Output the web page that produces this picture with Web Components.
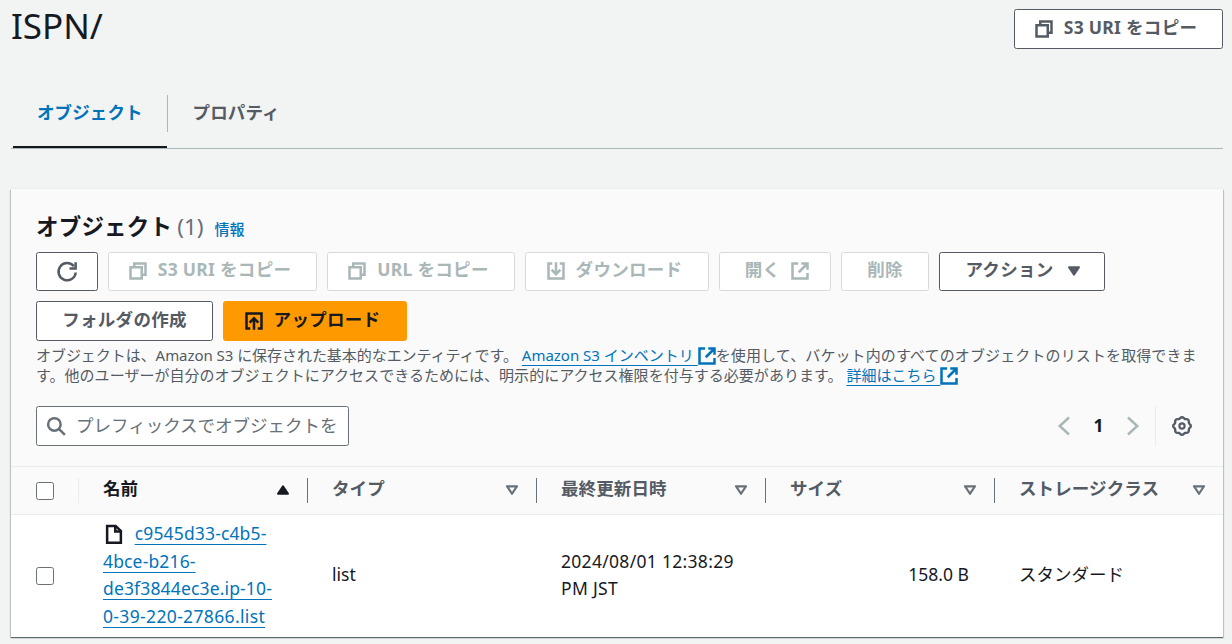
<!DOCTYPE html>
<html lang="ja">
<head>
<meta charset="utf-8">
<title>ISPN/</title>
<style>
    body {
        margin: 0;
        height: 644px;
        overflow: hidden;
        background: #f2f3f3;
        color: #16191f;
        font: 17.5px/27.5px "Noto Sans", "Noto Sans CJK JP", sans-serif;
    }
</style>
</head>
<body>
<s3-page></s3-page>
<script>
// rounded cog outline with eight teeth
function gearPath() {
    const points = [];
    for (let i = 0; i < 64; i++) {
        const a = (i / 64) * Math.PI * 2;
        const r = 6.55 + 0.5 * Math.cos(8 * a);
        points.push(`${(8 + r * Math.cos(a)).toFixed(2)} ${(8 + r * Math.sin(a)).toFixed(2)}`);
    }
    return `M${points.join('L')}z`;
}

const icons = {
    copy: '<path d="M2 5h9v9H2z"/><path d="M5 5V2h9v9h-3"/>',
    download: '<path d="M5 2H2v12h12V2h-3"/><path d="M8 1v9M4.5 7L8 10.5 11.5 7"/>',
    upload: '<path d="M5 14H2V2h12v12h-3"/><path d="M8 15V6M4.5 9.3L8 5.8l3.5 3.5"/>',
    external: '<path d="M14 9.5V14H2V2h4.5"/><path d="M9 2h5v5M14 2L7 9"/>',
    refresh: '<path d="M15 9.2A6.9 6.9 0 1 1 13.5 4.2"/><path d="M14.9 1v5H10"/>',
    caret: '<path d="M4 5h8l-4 6z" fill="currentColor" stroke-width="1.6" stroke-linejoin="round"/>',
    sortup: '<path d="M4 11h8L8 5z" fill="currentColor" stroke-width="1.6" stroke-linejoin="round"/>',
    sort: '<path d="M4 5h8l-4 6z" stroke-width="1.8" stroke-linejoin="round"/>',
    search: '<circle cx="6.7" cy="6.7" r="5"/><path d="M10.3 10.3l4.8 4.8"/>',
    prev: '<path d="M12 1.2L4.6 8l7.4 6.8"/>',
    next: '<path d="M4 1.2L11.4 8 4 14.8"/>',
    file: '<path d="M2.5 1.5h6.8l4.2 4.2v9.3h-11z"/><path d="M9 1.5V6h4.5"/>',
    gear: `<path d="${gearPath()}" stroke-width="1.9"/><circle cx="8" cy="8" r="2.1" stroke-width="1.7"/>`
};

class S3Icon extends HTMLElement {
    constructor() {
        super();
        this.attachShadow({ mode: 'open' });
    }

    connectedCallback() {
        const name = this.getAttribute('name');
        this.shadowRoot.innerHTML = `
            <style>
                :host { display: inline-block; width: 20px; height: 20px; flex: none; }
                svg {
                    display: block;
                    width: 20px;
                    height: 20px;
                    overflow: visible;
                    fill: none;
                    stroke: currentColor;
                    stroke-width: 2;
                }
            </style>
            <svg viewBox="0 0 16 16">${icons[name]}</svg>
        `;
    }
}

class S3Button extends HTMLElement {
    constructor() {
        super();
        this.attachShadow({ mode: 'open' });
        this.shadowRoot.innerHTML = `
            <style>
                :host { display: block; flex: none; color: #545b64; }
                :host([disabled]) { color: #aab7b8; }
                :host([primary]) { color: #16191f; }
                button {
                    box-sizing: border-box;
                    width: 100%;
                    height: var(--height, 39px);
                    display: flex;
                    align-items: center;
                    justify-content: center;
                    gap: 10px;
                    padding: 0 0 1px;
                    border: 1px solid currentColor;
                    border-radius: 2.5px;
                    background: #fff;
                    color: inherit;
                    font: inherit;
                    font-weight: 700;
                    letter-spacing: 0.3px;
                    white-space: nowrap;
                }
                :host([disabled]) button { border-color: #d5dbdb; }
                :host([primary]) button { background: #ff9900; border-color: #ff9900; }
                :host([icon="start"]) button { padding-right: 6px; }
                :host([icon="end"]) button { padding-left: 5px; }
                .label { margin-bottom: 2px; }
            </style>
            <button><slot name="before"></slot><span class="label"><slot></slot></span><slot name="after"></slot></button>
        `;
    }
}

class S3Tab extends HTMLElement {
    constructor() {
        super();
        this.attachShadow({ mode: 'open' });
        this.shadowRoot.innerHTML = `
            <style>
                :host {
                    display: flex;
                    align-items: flex-start;
                    height: 53px;
                    font-weight: 700;
                    color: #545b64;
                }
                :host([active]) { color: #0073bb; border-bottom: 2px solid #16191f; height: 51px; }
                .label {
                    height: 37px;
                    line-height: 34px;
                    padding: 0 24px 0 25px;
                    letter-spacing: 0.1px;
                }
                :host([active]) .label { padding-left: 24px; }
            </style>
            <span class="label"><slot></slot></span>
        `;
    }
}

class S3Link extends HTMLElement {
    constructor() {
        super();
        this.attachShadow({ mode: 'open' });
        this.shadowRoot.innerHTML = `
            <style>
                :host { display: inline; color: #0073bb; }
                a {
                    color: inherit;
                    text-decoration: underline;
                    text-decoration-thickness: 1px;
                    text-underline-offset: 4px;
                    text-decoration-skip-ink: none;
                }
            </style>
            <a><slot></slot></a>
        `;
    }
}

class S3Checkbox extends HTMLElement {
    constructor() {
        super();
        this.attachShadow({ mode: 'open' });
        this.shadowRoot.innerHTML = `
            <style>
                :host {
                    display: block;
                    box-sizing: border-box;
                    width: 18px;
                    height: 18px;
                    border: 1px solid #687078;
                    border-radius: 2.5px;
                    background: #fff;
                }
            </style>
        `;
    }
}

class S3Column extends HTMLElement {
    constructor() {
        super();
        this.attachShadow({ mode: 'open' });
    }

    connectedCallback() {
        const icon = this.hasAttribute('sorted') ? 'sortup' : 'sort';
        this.shadowRoot.innerHTML = `
            <style>
                :host {
                    display: flex;
                    align-items: center;
                    justify-content: space-between;
                    box-sizing: border-box;
                    height: 25px;
                    padding: 0 14px 0 24px;
                    border-right: 1px solid #687078;
                    font-weight: 700;
                    color: #545b64;
                }
                :host([sorted]) { color: #16191f; }
                :host([last]) { border-right-color: transparent; }
                s3-icon { color: #687078; margin-bottom: 2px; }
                :host([sorted]) s3-icon { color: #16191f; }
                span { margin-bottom: 3px; white-space: nowrap; letter-spacing: 0.1px; }
            </style>
            <span><slot></slot></span><s3-icon name="${icon}"></s3-icon>
        `;
    }
}

class S3Table extends HTMLElement {
    constructor() {
        super();
        this.attachShadow({ mode: 'open' });
        this.shadowRoot.innerHTML = `
            <style>
                :host { display: block; }
                .head, .row {
                    display: grid;
                    grid-template-columns: 68px repeat(5, 229px);
                    align-items: center;
                }
                .head {
                    box-sizing: border-box;
                    height: 49px;
                    border-top: 1px solid #eaeded;
                    border-bottom: 1px solid #eaeded;
                    background: #fafafa;
                }
                .row { height: 122px; background: #fff; }
                .check {
                    display: flex;
                    align-items: center;
                    box-sizing: border-box;
                    height: 25px;
                    padding-left: 25px;
                }
                .head .check { border-right: 1px solid #eaeded; }
                .cell { padding: 0 26px 2px 24px; white-space: nowrap; }
                .name { letter-spacing: 0.15px; }
                .name s3-icon { vertical-align: -4px; margin: 0 6px 0 1px; }
                .wide { letter-spacing: 0.35px; }
                .date { letter-spacing: 0.3px; }
                .size { text-align: right; }
            </style>
            <div class="head">
                <div class="check"><s3-checkbox></s3-checkbox></div>
                <s3-column sorted>名前</s3-column>
                <s3-column>タイプ</s3-column>
                <s3-column>最終更新日時</s3-column>
                <s3-column>サイズ</s3-column>
                <s3-column last>ストレージクラス</s3-column>
            </div>
            <div class="row">
                <div class="check"><s3-checkbox></s3-checkbox></div>
                <div class="cell name"><s3-icon name="file"></s3-icon> <s3-link>c9545d33-c4b5-<br>4bce-b216-<br>de3f3844ec3e.ip-10-<br><span class="wide">0-39-220-27866.list</span></s3-link></div>
                <div class="cell">list</div>
                <div class="cell date">2024/08/01 12:38:29<br>PM JST</div>
                <div class="cell size">158.0 B</div>
                <div class="cell">スタンダード</div>
            </div>
        `;
    }
}

class S3Panel extends HTMLElement {
    constructor() {
        super();
        this.attachShadow({ mode: 'open' });
        this.shadowRoot.innerHTML = `
            <style>
                :host {
                    display: block;
                    width: 1212px;
                    height: 448px;
                    overflow: hidden;
                    background: #fafafa;
                }
                .top { padding: 23px 25px 0; }
                h2 {
                    margin: 0;
                    height: 40px;
                    font-size: 22.5px;
                    line-height: 30px;
                    display: flex;
                    align-items: baseline;
                }
                h2 .title { letter-spacing: 0.2px; }
                h2 .count { margin-left: 5px; font-weight: 400; color: #687078; }
                h2 .info { margin-left: 11px; font-size: 15px; font-weight: 500; color: #0073bb; }
                .actions { display: flex; flex-wrap: wrap; gap: 10px; }
                p {
                    margin: 4px 0 0;
                    font-size: 15px;
                    line-height: 20px;
                    color: #545b64;
                    white-space: nowrap;
                }
                p s3-icon { position: relative; top: 1px; color: #0073bb; margin: 0 -1px 0 -1px; vertical-align: top; }
                .lead { letter-spacing: -0.05px; }
                .rest { letter-spacing: 0.12px; }
                .access { letter-spacing: 0.03px; }
                .tools { display: flex; align-items: center; height: 40px; margin-top: 21px; }
                .search {
                    display: flex;
                    align-items: center;
                    gap: 10px;
                    box-sizing: border-box;
                    width: 313px;
                    height: 40px;
                    padding: 0 9px;
                    border: 1px solid #687078;
                    border-radius: 2.5px;
                    background: #fff;
                    color: #687078;
                }
                .search span { white-space: nowrap; }
                .pages {
                    display: flex;
                    align-items: center;
                    margin-left: auto;
                    height: 40px;
                    color: #aab7b8;
                }
                .pages b { width: 49px; text-align: center; color: #16191f; }
                .settings {
                    display: flex;
                    align-items: center;
                    height: 40px;
                    margin-left: 12px;
                    padding: 0 6px 0 16px;
                    border-left: 1px solid #eaeded;
                    color: #545b64;
                }
                s3-table { margin-top: 20px; }
            </style>
            <div class="top">
                <h2><span class="title">オブジェクト</span><span class="count">(1)</span><span class="info">情報</span></h2>
                <div class="actions">
                    <s3-button style="width: 62px"><s3-icon slot="before" name="refresh" style="margin-right: -10px"></s3-icon></s3-button>
                    <s3-button disabled icon="start" style="width: 209px"><s3-icon slot="before" name="copy"></s3-icon>S3 URI をコピー</s3-button>
                    <s3-button disabled icon="start" style="width: 188px"><s3-icon slot="before" name="copy"></s3-icon>URL をコピー</s3-button>
                    <s3-button disabled icon="start" style="width: 184px"><s3-icon slot="before" name="download"></s3-icon>ダウンロード</s3-button>
                    <s3-button disabled icon="end" style="width: 112px">開く<s3-icon slot="after" name="external"></s3-icon></s3-button>
                    <s3-button disabled style="width: 88px">削除</s3-button>
                    <s3-button icon="end" style="width: 166px">アクション<s3-icon slot="after" name="caret"></s3-icon></s3-button>
                    <s3-button style="width: 177px; --height: 40px">フォルダの作成</s3-button>
                    <s3-button primary icon="start" style="width: 184px; --height: 40px"><s3-icon slot="before" name="upload"></s3-icon>アップロード</s3-button>
                </div>
                <p><span class="lead">オブジェクトは、Amazon S3 に保存された基本的なエンティティです。</span><s3-link>Amazon S3 インベントリ </s3-link><s3-icon name="external"></s3-icon><span class="rest">を使用して、バケット内のすべてのオブジェクトのリストを取得できま</span><br><span class="access">す。他のユーザーが自分のオブジェクトにアクセスできるためには、明示的にアクセス権限を付与する必要があります。</span><s3-link>詳細はこちら </s3-link><s3-icon name="external"></s3-icon></p>
                <div class="tools">
                    <div class="search"><s3-icon name="search"></s3-icon><span>プレフィックスでオブジェクトを</span></div>
                    <div class="pages">
                        <s3-icon name="prev"></s3-icon><b>1</b><s3-icon name="next"></s3-icon>
                        <div class="settings"><s3-icon name="gear"></s3-icon></div>
                    </div>
                </div>
            </div>
            <s3-table></s3-table>
        `;
    }
}

class S3Page extends HTMLElement {
    constructor() {
        super();
        this.attachShadow({ mode: 'open' });
        this.shadowRoot.innerHTML = `
            <style>
                :host { display: block; padding: 0 9px 0 11px; }
                header { display: flex; justify-content: space-between; height: 95px; }
                h1 { margin: 0; font-size: 35px; line-height: 52px; font-weight: 400; }
                header s3-button { width: 209px; margin-top: 9px; --height: 40px; }
                nav {
                    display: flex;
                    height: 53px;
                    border-bottom: 1px solid #aab7b8;
                    padding-left: 2px;
                }
                nav i { width: 1px; height: 37px; background: #aab7b8; }
                s3-panel {
                    margin-top: 40px;
                    box-shadow: 0 -1px 0 #eaeded, 0 1px 1px rgba(0, 28, 36, 0.5), 1px 1px 1px rgba(0, 28, 36, 0.15), -1px 1px 1px rgba(0, 28, 36, 0.15);
                }
            </style>
            <header>
                <h1>ISPN/</h1>
                <s3-button icon="start"><s3-icon slot="before" name="copy"></s3-icon>S3 URI をコピー</s3-button>
            </header>
            <nav><s3-tab active>オブジェクト</s3-tab><i></i><s3-tab>プロパティ</s3-tab></nav>
            <s3-panel></s3-panel>
        `;
    }
}

customElements.define('s3-icon', S3Icon);
customElements.define('s3-button', S3Button);
customElements.define('s3-tab', S3Tab);
customElements.define('s3-link', S3Link);
customElements.define('s3-checkbox', S3Checkbox);
customElements.define('s3-column', S3Column);
customElements.define('s3-table', S3Table);
customElements.define('s3-panel', S3Panel);
customElements.define('s3-page', S3Page);
</script>
</body>
</html>
